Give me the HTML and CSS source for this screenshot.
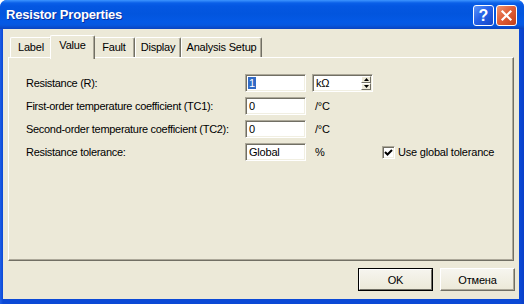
FILE: index.html
```html
<!DOCTYPE html>
<html>
<head>
<meta charset="utf-8">
<link rel="stylesheet" href="styles.css">
</head>
<body>
<div class="window">
  <div class="titlebar">
    <span class="title">Resistor Properties</span>
    <div class="tbtns">
      <div class="tbtn help">?</div>
      <div class="tbtn close">
        <svg width="13" height="13" viewBox="0 0 13 13"><path d="M2.5 2.5 L10.5 10.5 M10.5 2.5 L2.5 10.5" stroke="#fff" stroke-width="2.2" stroke-linecap="square"/></svg>
      </div>
    </div>
  </div>
  <div class="client">
    <div class="tabs">
      <div class="tab t-label">Label</div>
      <div class="tab t-value sel">Value</div>
      <div class="tab t-fault">Fault</div>
      <div class="tab t-display">Display</div>
      <div class="tab t-analysis">Analysis Setup</div>
    </div>
    <div class="panel">
      <div class="form">
        <div class="lbl">Resistance (R):</div>
        <div class="edit"><span class="hl">1</span></div>
        <div class="combo">
          <span class="ctext">kΩ</span>
          <div class="spin">
            <div class="sbtn"><svg width="5" height="3" viewBox="0 0 5 3"><path d="M2.5 0 L5 3 L0 3Z" fill="#000"/></svg></div>
            <div class="sbtn"><svg width="5" height="3" viewBox="0 0 5 3"><path d="M0 0 L5 0 L2.5 3Z" fill="#000"/></svg></div>
          </div>
        </div>
        <div></div>

        <div class="lbl">First-order temperature coefficient (TC1):</div>
        <div class="edit">0</div>
        <div class="unit">/°C</div>
        <div></div>

        <div class="lbl">Second-order temperature coefficient (TC2):</div>
        <div class="edit">0</div>
        <div class="unit">/°C</div>
        <div></div>

        <div class="lbl">Resistance tolerance:</div>
        <div class="edit">Global</div>
        <div class="unit">%</div>
        <div class="chk">
          <div class="box"><svg width="9" height="9" viewBox="0 0 9 9"><path d="M1 4 L3.5 6.5 L8 2" fill="none" stroke="#000" stroke-width="2"/></svg></div>
          <span>Use global tolerance</span>
        </div>
      </div>
    </div>
    <div class="buttons">
      <div class="btn default"><div class="face">OK</div></div>
      <div class="btn"><div class="face">Отмена</div></div>
    </div>
  </div>
</div>
</body>
</html>
```
FILE: styles.css
```css
html, body {
  margin: 0;
  padding: 0;
  background: #ffffff;
  width: 524px;
  height: 304px;
  overflow: hidden;
}
.window {
  width: 524px;
  height: 304px;
  box-sizing: border-box;
  background: linear-gradient(to right, #1f5fe6 0px, #0b49d6 3px, #0b49d6 520px, #0a3fc8 524px);
  border-radius: 7px 7px 0 0;
  display: flex;
  flex-direction: column;
  padding: 0 5px 5px 3px;
  font-family: "Liberation Sans", Arial, sans-serif;
  font-size: 11px;
  color: #000;
}
.titlebar {
  height: 29px;
  margin: 0 -5px 0 -3px;
  border-radius: 7px 7px 0 0;
  background: linear-gradient(to bottom, #3d95ff 0px, #0a5fe8 3px, #0457e2 6px, #0255de 14px, #0459e6 22px, #0658e0 25px, #0a48c8 28px, #0a44c0 29px);
  display: flex;
  align-items: flex-start;
  justify-content: space-between;
  padding: 0 7px 0 6px;
}
.title {
  color: #fff;
  font-weight: bold;
  font-size: 13px;
  line-height: 15px;
  margin-top: 7px;
  letter-spacing: -0.2px;
  text-shadow: 1px 1px 0 #0a2e9a;
}
.tbtns {
  display: flex;
  gap: 2px;
  margin-top: 5px;
}
.tbtn {
  width: 21px;
  height: 21px;
  box-sizing: border-box;
  border: 1px solid #ffffff;
  border-radius: 3px;
  display: flex;
  align-items: center;
  justify-content: center;
}
.help {
  background: linear-gradient(135deg, #5d94f8 0%, #2762e8 45%, #1546c8 100%);
  color: #fff;
  font-family: "Liberation Sans", Arial, sans-serif;
  font-weight: bold;
  font-size: 16px;
  line-height: 19px;
}
.close {
  background: linear-gradient(135deg, #f0946e 0%, #e0603a 45%, #c33f1a 100%);
}
.client {
  flex: 1;
  background: #ece9d8;
  display: flex;
  flex-direction: column;
  padding-top: 6px;
  letter-spacing: -0.2px;
}
.tabs {
  display: flex;
  align-items: flex-end;
  height: 22px;
  margin-left: 7px;
}
.tab {
  height: 20px;
  box-sizing: border-box;
  border-top: 1px solid #ffffff;
  border-left: 1px solid #ffffff;
  border-right: 1px solid #716f64;
  box-shadow: inset -1px 0 0 #aca899;
  border-radius: 2px 2px 0 0;
  text-align: center;
  line-height: 18px;
  background: #ece9d8;
}
.t-label { width: 42px; }
.t-value { width: 41px; }
.t-fault { width: 42px; }
.t-display { width: 46px; }
.t-analysis { width: 81px; }
.tab.sel {
  height: 24px;
  width: 45px;
  margin: 0 -2px -2px -2px;
  line-height: 19px;
  position: relative;
  z-index: 1;
}
.panel {
  height: 204px;
  box-sizing: border-box;
  margin: 0 5px 0 5px;
  border-top: 1px solid #ffffff;
  border-left: 1px solid #ffffff;
  border-right: 1px solid #716f64;
  border-bottom: 1px solid #716f64;
  box-shadow: inset -1px -1px 0 #aca899;
  padding: 16px 0 0 17px;
}
.form {
  display: grid;
  grid-template-columns: 219px 61px 76px auto;
  grid-auto-rows: 18px;
  row-gap: 5px;
  align-items: center;
}
.lbl {
  letter-spacing: -0.3px;
  white-space: nowrap;
}
.edit, .combo {
  height: 18px;
  box-sizing: border-box;
  background: #fff;
  border-top: 1px solid #aca899;
  border-left: 1px solid #aca899;
  border-right: 1px solid #ffffff;
  border-bottom: 1px solid #ffffff;
  box-shadow: inset 1px 1px 0 #716f64, inset -1px -1px 0 #f1efe2;
  padding: 1px 2px 0 3px;
  line-height: 15px;
}
.hl {
  background: #316ac5;
  color: #fff;
  padding: 0 1px;
  margin-left: -1px;
}
.combo {
  margin-left: 6px;
  width: 61px;
  display: flex;
  justify-content: space-between;
  padding: 1px 1px 1px 3px;
}
.ctext { line-height: 15px; }
.spin {
  width: 10px;
  display: flex;
  flex-direction: column;
}
.sbtn {
  flex: 1;
  box-sizing: border-box;
  background: #ece9d8;
  border-top: 1px solid #fff;
  border-left: 1px solid #fff;
  border-right: 1px solid #716f64;
  border-bottom: 1px solid #716f64;
  display: flex;
  align-items: center;
  justify-content: center;
}
.unit {
  padding-left: 9px;
}
.chk {
  display: flex;
  align-items: center;
  gap: 3px;
}
.box {
  width: 13px;
  height: 13px;
  box-sizing: border-box;
  background: #fff;
  border-top: 1px solid #aca899;
  border-left: 1px solid #aca899;
  border-right: 1px solid #fff;
  border-bottom: 1px solid #fff;
  box-shadow: inset 1px 1px 0 #716f64, inset -1px -1px 0 #f1efe2;
  display: flex;
  align-items: center;
  justify-content: center;
}
.buttons {
  display: flex;
  justify-content: flex-end;
  gap: 7px;
  margin-top: 7px;
  padding-right: 4px;
}
.btn {
  width: 75px;
  height: 23px;
  box-sizing: border-box;
  border-top: 1px solid #ffffff;
  border-left: 1px solid #ffffff;
  border-right: 1px solid #716f64;
  border-bottom: 1px solid #716f64;
  background: linear-gradient(to bottom, #f6f5ef, #ece9d8);
  display: flex;
}
.btn .face {
  flex: 1;
  display: flex;
  align-items: center;
  justify-content: center;
  box-shadow: inset -1px -1px 0 #aca899;
}
.btn.default {
  border: 1px solid #000;
}
.btn.default .face {
  border-top: 1px solid #fff;
  border-left: 1px solid #fff;
  border-right: 1px solid #716f64;
  border-bottom: 1px solid #716f64;
  box-shadow: none;
}
```
